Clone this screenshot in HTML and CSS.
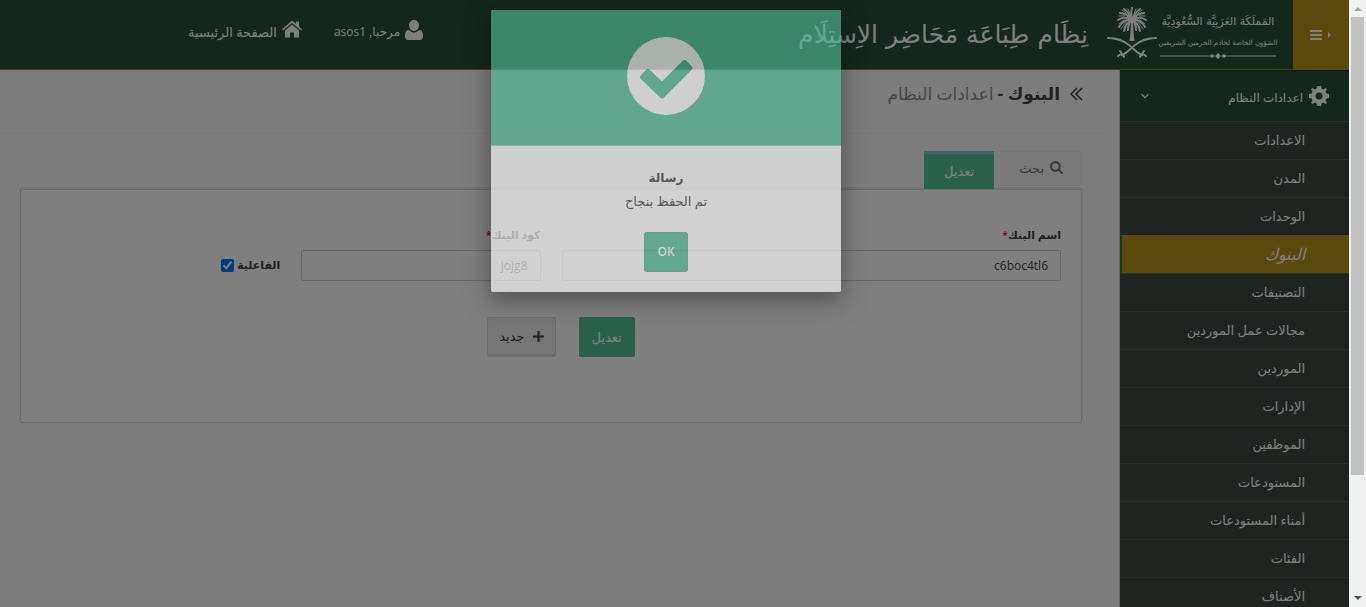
FILE: index.html
```html
<!DOCTYPE html>
<html lang="ar">
<head>
<meta charset="utf-8">
<title>البنوك - اعدادات النظام</title>
<link rel="stylesheet" href="styles.css">
</head>
<body>
<div class="window">
  <div class="app" dir="rtl">
    <header class="topbar">
      <button class="menu-toggle" aria-label="القائمة">
        <svg class="menu-icon" viewBox="0 0 22 12"><path d="M0 3l3 3-3 3z" transform="translate(18 0)"/><path d="M0 1h12v2H0zM0 5h12v2H0zM0 9h12v2H0z"/></svg>
      </button>
      <div class="brand">
        <div class="brand-name">
          <span class="brand-line">المَملَكَة العَرَبِيَّة السُّعُودِيَّة</span>
          <span class="brand-line brand-small">الشؤون الخاصة لخادم الحرمين الشريفين</span>
          <svg class="ornament" viewBox="0 0 116 6"><path d="M0 3h49M67 3h49" stroke="currentColor"/><path d="M49 3l3-2 3 2-3 2zM55 3l3-3 3 3-3 3zM61 3l3-2 3 2-3 2z" fill="currentColor"/></svg>
        </div>
        <svg class="emblem" viewBox="0 0 50 52" fill="none" stroke="currentColor" stroke-linecap="round">
          <path d="M24 14c-.4 8-.6 14-1.500 20h5c-.9-6-1.100-12-1.500-20z" fill="currentColor" stroke="none"/>
          <g fill="none" stroke-width="2">
            <path d="M25 13C24 8 24 4 25 1M25 13C23 8 20 4 17 2M25 13C21 8 17 6 13 6M25 13C20 10 15 10 11 13M25 13C20 12 15 15 12 20M25 13C22 14 18 18 17 24"/>
            <path d="M25 13C27 8 30 4 33 2M25 13C29 8 33 6 37 6M25 13C30 10 35 10 39 13M25 13C30 12 35 15 38 20M25 13C28 14 32 18 33 24M24 14C21 17 21 20 21 23M26 14C29 17 29 20 29 23"/>
          </g>
          <g fill="none" stroke-width="1">
            <path d="M19 6l-4-3M17 9l-5 0M17 13l-5 4M19 15l-5 7M31 6l4-3M33 9l5 0M33 13l5 4M31 15l5 7M23 7l-2-5M27 7l2-5"/>
          </g>
          <path d="M1 31c9 0 16 3 21 7 6 5 9 9 13 10M49 31c-9 0-16 3-21 7-6 5-9 9-13 10" stroke-width="2"/>
          <path d="M13 44l4 6M11 49c2-2 4-2 6 0M37 44l-4 6M39 49c-2-2-4-2-6 0" stroke-width="2"/>
        </svg>
        <span class="system-name">نِظَام طِبَاعَة مَحَاضِر الاِستِلَام</span>
      </div>
      <nav class="top-links">
        <a href="#" class="top-link">
          <svg class="user-icon" viewBox="0 0 18 20"><path d="M9 0a5 5 0 0 1 5 5c0 3-2 6-5 6S4 8 4 5a5 5 0 0 1 5-5z"/><path d="M4 10c1 1.500 3 2.500 5 2.500s4-1 5-2.500c3 0 4 3 4 6 0 2.500-1 4-3 4H3c-2 0-3-1.500-3-4 0-3 1-6 4-6z"/></svg>
          <span class="user-name">مرحبا, asos1</span>
        </a>
        <a href="#" class="top-link">
          <svg class="home-icon" viewBox="0 0 20 17"><path d="M10 4l7 6v7h-5v-5H8v5H3v-7z"/><path d="M10 0l4 3.500V1h3v5l3 3-1 1-9-7.500L1 10 0 9z"/></svg>
          <span>الصفحة الرئيسية</span>
        </a>
      </nav>
    </header>

    <div class="body">
      <aside class="sidebar">
        <a href="#" class="side-head">
          <svg class="gear-icon" viewBox="0 0 20 20"><path fill-rule="evenodd" d="M8 0h4l.6 2.800 1.700.7L16.700 2 18 3.300l-1.500 2.400.7 1.700L20 8v4l-2.800.6-.7 1.700 1.500 2.400-1.300 1.300-2.400-1.500-1.700.7L12 20H8l-.6-2.800-1.700-.7L3.300 18 2 16.700l1.500-2.400-.7-1.700L0 12V8l2.800-.6.7-1.700L2 3.300 3.300 2l2.400 1.500 1.700-.7zM10 6.500a3.500 3.500 0 1 0 0 7 3.500 3.500 0 0 0 0-7z"/></svg>
          <span>اعدادات النظام</span>
          <svg class="chevron" viewBox="0 0 8 6"><path d="M1 1l3 3 3-3" fill="none" stroke="currentColor"/></svg>
        </a>
        <ul class="side-list">
          <li><a href="#">الاعدادات</a></li>
          <li><a href="#">المدن</a></li>
          <li><a href="#">الوحدات</a></li>
          <li><a href="#" class="current">البنوك</a></li>
          <li><a href="#">التصنيفات</a></li>
          <li><a href="#">مجالات عمل الموردين</a></li>
          <li><a href="#">الموردين</a></li>
          <li><a href="#">الإدارات</a></li>
          <li><a href="#">الموظفين</a></li>
          <li><a href="#">المستودعات</a></li>
          <li><a href="#">أمناء المستودعات</a></li>
          <li><a href="#">الفئات</a></li>
          <li><a href="#">الأصناف</a></li>
        </ul>
      </aside>

      <main class="content">
        <h1 class="page-title">
          <svg class="double-angle" viewBox="0 0 13 14"><path d="M7 1L1 7l6 6M12 1L6 7l6 6" fill="none" stroke="currentColor" stroke-width="1.500"/></svg>
          <span><b>البنوك -</b> اعدادات النظام</span>
        </h1>
        <div class="tabs">
          <button class="tab">
            <svg class="search-icon" viewBox="0 0 12 12"><circle cx="5" cy="5" r="4" fill="none" stroke="currentColor" stroke-width="2"/><path d="M8 8l3 3" stroke="currentColor" stroke-width="2" stroke-linecap="round"/></svg>
            <span>بحث</span>
          </button>
          <button class="tab tab-active">تعديل</button>
        </div>
        <form class="panel">
          <div class="fields">
            <div class="field field-wide">
              <label for="bank-name">اسم البنك<span class="star">*</span></label>
              <input id="bank-name" type="text" value="c6boc4tl6">
            </div>
            <div class="field">
              <label for="bank-code">كود البنك<span class="star">*</span></label>
              <input id="bank-code" type="text" value="jojg8">
            </div>
            <div class="check">
              <label for="active">الفاعلية</label>
              <input id="active" type="checkbox" checked>
            </div>
          </div>
          <div class="actions">
            <button type="button" class="btn btn-green">تعديل</button>
            <button type="button" class="btn btn-plain">
              <svg class="plus-icon" viewBox="0 0 10 10"><path d="M4 0h2v4h4v2H6v4H4V6H0V4h4z"/></svg>
              <span>جديد</span>
            </button>
          </div>
        </form>
      </main>
    </div>

    <div class="overlay">
      <div class="dialog" role="dialog" aria-labelledby="dialog-title">
        <div class="dialog-head">
          <svg class="check-icon" viewBox="0 0 78 78"><circle cx="39" cy="39" r="39" fill="#fff"/><path d="M14 38l5-5q2-2 4 0L35 44.500 55.500 24q2-2 4 0l5 5q2 2 0 4L37 60.500q-2 2-4 0L14 42q-2-2 0-4z" fill="#53be99"/></svg>
        </div>
        <div class="dialog-body">
          <h2 id="dialog-title">رسالة</h2>
          <p>تم الحفظ بنجاح</p>
          <button class="ok">OK</button>
        </div>
      </div>
    </div>
  </div>

  <div class="scrollbar">
    <svg class="arrow arrow-up" viewBox="0 0 8 4"><path d="M4 0l4 4H0z"/></svg>
    <div class="track"><div class="thumb"></div></div>
    <svg class="arrow" viewBox="0 0 8 4"><path d="M0 0h8L4 4z"/></svg>
  </div>
</div>
</body>
</html>
```
FILE: styles.css
```css
* { box-sizing: border-box; }

body {
  margin: 0;
  font: 13px/20px "Open Sans", "Noto Sans", "DejaVu Sans", sans-serif;
  color: #444;
}

button, input { font: inherit; color: inherit; }
button { border: 0; cursor: pointer; }
a { color: inherit; text-decoration: none; }
svg { fill: currentColor; flex: none; }

.window { display: flex; height: 100vh; overflow: hidden; }
.app {
  position: relative;
  flex: 1;
  min-width: 0;
  display: flex;
  flex-direction: column;
  background: #f9f9f9;
  overflow: hidden;
}

.topbar {
  display: flex;
  flex: none;
  height: 70px;
  background: #284e3a;
  color: #fff;
}
.menu-toggle {
  display: flex;
  align-items: center;
  justify-content: center;
  width: 56px;
  background: #b49018;
  color: #fff;
}
.menu-icon { width: 22px; height: 12px; }
.brand {
  display: flex;
  flex: 1;
  align-items: center;
  padding-right: 17px;
  border-bottom: 1px solid #a08018;
  white-space: nowrap;
}
.brand-name {
  display: flex;
  flex-direction: column;
  align-items: center;
  width: 116px;
}
.brand-line { font: 11px/22px "DejaVu Sans", sans-serif; }
.brand-small { font-size: 7px; line-height: 20px; }
.ornament { width: 116px; height: 6px; }
.emblem { width: 50px; height: 52px; margin: 0 3px 4px 19px; }
.emblem > path { fill: none; }
.emblem > path:first-child { fill: currentColor; }
.system-name { font: 25px/48px "DejaVu Sans", sans-serif; }
.top-links {
  display: flex;
  gap: 32px;
  padding: 20px 0 0 188px;
  border-bottom: 1px solid #a08018;
}
.top-link { display: flex; gap: 5px; align-items: flex-start; white-space: nowrap; }
.top-link span { padding-top: 2px; }
.top-link .user-name { font-size: 12px; }
.user-icon { width: 18px; height: 20px; }
.home-icon { width: 20px; height: 18px; }

.body { display: flex; flex: 1; min-height: 0; }
.sidebar {
  width: 230px;
  flex: none;
  background: #3e4842;
  color: #fff;
  border-left: 1px solid #ccc;
}
.side-head {
  display: flex;
  align-items: center;
  gap: 6px;
  height: 51px;
  padding: 0 20px;
  border-top: 1px solid #1c3829;
  background: #284e3a;
  font-size: 12px;
}
.side-head span { padding-top: 3px; }
.gear-icon { width: 20px; height: 20px; }
.chevron { width: 10px; height: 7px; margin-right: auto; }
.side-list { margin: 0; padding: 0; list-style: none; }
.side-list a {
  display: block;
  height: 38px;
  padding: 8px 44px 0 0;
  border-top: 1px solid #505a54;
}
.side-list .current {
  background: #b49018;
  border-left: 2px solid #288028;
  border-top-color: #b49018;
  font-size: 16px;
  font-style: italic;
}

.content { flex: 1; min-width: 0; }
.page-title {
  display: flex;
  align-items: center;
  gap: 10px;
  height: 61px;
  margin: 0 16px 20px 0;
  padding: 0 20px 12px 0;
  border-bottom: 1px solid #fff;
  font-size: 17px;
  font-weight: 400;
  color: #87929a;
}
.page-title b { color: #444; }
.double-angle { width: 13px; height: 14px; color: #444; }
.tabs {
  display: flex;
  align-items: flex-start;
  gap: 6px;
  height: 38px;
  margin: 0 37px 0 20px;
  border-bottom: 2px solid #e8e8e8;
}
.tab {
  display: flex;
  align-items: center;
  gap: 6px;
  height: 35px;
  padding: 0 19px 2px;
  background: #f0f0f0;
  color: #777;
}
.tab-active {
  height: 38px;
  padding: 0 20px 2px;
  background: #54c29a;
  color: #fff;
  border-top: 3px solid #8ebfd0;
}
.search-icon { width: 13px; height: 13px; }

.panel {
  margin: 0 37px 0 20px;
  padding: 35px 20px 65px;
  background: #fff;
  border: 1px solid #d8d8d8;
}
.fields {
  display: grid;
  grid-template-columns: repeat(12, 1fr);
  column-gap: 21px;
}
.field {
  display: flex;
  flex-direction: column;
  gap: 5px;
  grid-column: span 3;
  min-width: 0;
  font-size: 12px;
}
.field-wide { grid-column: span 6; }
.field label, .check label { font-size: 11px; font-weight: 600; }
.field .star { color: #f00; font-size: 10px; }
.field input {
  width: 100%;
  height: 31px;
  padding: 0 12px;
  border: 1px solid #d0d0d0;
  border-radius: 2px;
  background: #fff;
  direction: rtl;
}
.check { display: flex; align-items: center; gap: 3px; grid-column: span 3; padding-top: 24px; }
.check input { width: 13px; height: 13px; margin: 0; accent-color: #0075ff; }
.actions { display: flex; justify-content: center; gap: 23px; margin-top: 36px; padding-left: 20px; }
.btn { display: flex; align-items: center; gap: 8px; height: 40px; padding: 0 13px; border-radius: 2px; }
.btn-green { background: #54c29a; color: #fff; }
.btn-plain { padding: 0 11px; background: #ececec; border: 1px solid #ddd; border-bottom-width: 3px; }
.plus-icon { width: 11px; height: 11px; }

.overlay {
  position: absolute;
  inset: 0;
  display: flex;
  justify-content: center;
  align-items: flex-start;
  padding-top: 10px;
  background: rgba(0, 0, 0, .5);
}
.dialog {
  width: 350px;
  margin-right: 17px;
  border-radius: 2px;
  background: #fff;
  box-shadow: 0 8px 24px rgba(0, 0, 0, .6);
  opacity: .64;
  text-align: center;
  overflow: hidden;
}
.dialog-head { padding: 27px 0; background: #53be99; height: 136px; border-bottom: 1px solid #8fd6bd; }
.check-icon { width: 78px; height: 78px; }
.dialog-body { padding: 20px; }
.dialog-body h2 { margin: 0; font-size: 12px; line-height: 24px; }
.dialog-body p { margin: 0 0 20px; line-height: 22px; }
.ok {
  height: 40px;
  padding: 0 12px;
  border: 1px solid #6bb27a;
  border-radius: 2px;
  background: #53be99;
  color: #fff;
  font-size: 12px;
  font-weight: 600;
}

.scrollbar {
  display: flex;
  flex-direction: column;
  align-items: center;
  justify-content: space-between;
  flex: none;
  width: 17px;
  padding: 7px 0;
  background: #f1f1f1;
}
.arrow { width: 8px; height: 4px; color: #505050; }
.arrow-up { color: #a3a3a3; }
.track { flex: 1; width: 13px; margin: 6px 0; }
.thumb { height: 80%; background: #c1c1c1; }
```
